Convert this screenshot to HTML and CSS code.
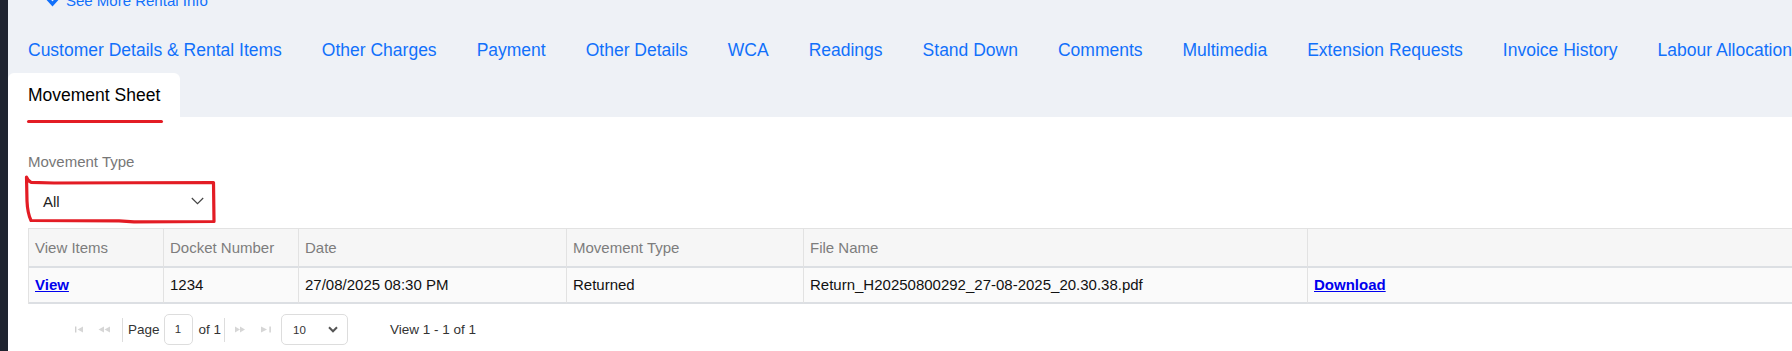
FILE: index.html
```html
<!DOCTYPE html>
<html lang="en">
<head>
<meta charset="utf-8">
<title>Movement Sheet</title>
<link rel="stylesheet" href="styles.css">
</head>
<body>
<div class="app">
  <aside class="sidebar"></aside>
  <main class="main">
    <header class="header">
      <a class="see-more" href="#">
        <svg class="see-more-icon" width="13" height="10" viewBox="0 0 13 10"><polyline points="2,2 6.5,7 11,2" fill="none" stroke="currentColor" stroke-width="3.4" stroke-linecap="square"/></svg>
        See More Rental Info
      </a>
      <nav class="tabs">
        <a class="tab" href="#">Customer Details &amp; Rental Items</a>
        <a class="tab" href="#">Other Charges</a>
        <a class="tab" href="#">Payment</a>
        <a class="tab" href="#">Other Details</a>
        <a class="tab" href="#">WCA</a>
        <a class="tab" href="#">Readings</a>
        <a class="tab" href="#">Stand Down</a>
        <a class="tab" href="#">Comments</a>
        <a class="tab" href="#">Multimedia</a>
        <a class="tab" href="#">Extension Requests</a>
        <a class="tab" href="#">Invoice History</a>
        <a class="tab" href="#">Labour Allocation</a>
      </nav>
      <div class="subtabs">
        <a class="subtab" href="#">Movement Sheet</a>
      </div>
    </header>

    <section class="panel">
      <label class="field-label">Movement Type</label>
      <div class="select-wrap">
        <div class="select">
          <span>All</span>
          <svg width="13" height="8" viewBox="0 0 13 8"><polyline points="0.8,1 6.5,6.6 12.2,1" fill="none" stroke="#444" stroke-width="1.2"/></svg>
        </div>
        <svg class="annot" width="194" height="50" viewBox="0 0 194 50">
          <path d="M2.5 2 Q4 6 7 7.3 L30 8 L189.5 7.5 L190 46.5 L110 46.8 L95 45.8 L7 45.5 Q3.5 38 3 26 Z" fill="none" stroke="#e31c24" stroke-width="3.2" stroke-linejoin="round" stroke-linecap="round"/>
        </svg>
      </div>

      <table class="grid">
        <colgroup>
          <col class="c1"><col class="c2"><col class="c3"><col class="c4"><col class="c5"><col class="c6">
        </colgroup>
        <thead>
          <tr>
            <th>View Items</th>
            <th>Docket Number</th>
            <th>Date</th>
            <th>Movement Type</th>
            <th>File Name</th>
            <th></th>
          </tr>
        </thead>
        <tbody>
          <tr>
            <td><a class="link" href="#">View</a></td>
            <td>1234</td>
            <td>27/08/2025 08:30 PM</td>
            <td>Returned</td>
            <td>Return_H20250800292_27-08-2025_20.30.38.pdf</td>
            <td><a class="link" href="#">Download</a></td>
          </tr>
        </tbody>
      </table>

      <div class="pager">
        <svg class="pg-first" width="8" height="7" viewBox="0 0 8 7"><rect x="0" y="0.5" width="1.4" height="6" fill="#cfcfcf"/><polygon points="8,0.5 2.6,3.5 8,6.5" fill="#d6d6d6"/></svg>
        <svg class="pg-prev" width="12" height="7" viewBox="0 0 12 7"><polygon points="6,0.5 0.5,3.5 6,6.5" fill="#d6d6d6"/><polygon points="12,0.5 6.5,3.5 12,6.5" fill="#d6d6d6"/></svg>
        <span class="pg-sep sep-a"></span>
        <span class="pg-text pg-page">Page</span>
        <span class="pg-input">1</span>
        <span class="pg-text pg-of">of 1</span>
        <span class="pg-sep sep-b"></span>
        <svg class="pg-next" width="10" height="7" viewBox="0 0 10 7"><polygon points="0,0.5 5,3.5 0,6.5" fill="#d6d6d6"/><polygon points="5,0.5 10,3.5 5,6.5" fill="#d6d6d6"/></svg>
        <svg class="pg-last" width="10" height="7" viewBox="0 0 10 7"><polygon points="0,0.5 6,3.5 0,6.5" fill="#d6d6d6"/><rect x="8.4" y="0.5" width="1.4" height="6" fill="#cfcfcf"/></svg>
        <div class="pg-size">
          <span>10</span>
          <svg width="10" height="7" viewBox="0 0 10 7"><polyline points="1,1.3 5,5.3 9,1.3" fill="none" stroke="#555" stroke-width="2"/></svg>
        </div>
        <span class="pg-text pg-info">View 1 - 1 of 1</span>
      </div>
    </section>
  </main>
</div>
</body>
</html>
```

FILE: styles.css
```css
* {
  box-sizing: border-box;
}

html, body {
  margin: 0;
  padding: 0;
  background: #ffffff;
}

body {
  font-family: "Liberation Sans", Arial, sans-serif;
  color: #111;
}

.app {
  display: flex;
  width: 100%;
  height: 100vh;
  overflow: hidden;
  background: #ffffff;
}

.sidebar {
  flex: none;
  width: 8px;
  background: #1f2430;
}

.main {
  flex: 1;
  min-width: 0;
  overflow: hidden;
  background: #ffffff;
}

/* ---------- header ---------- */
.header {
  background: #eef1f6;
  display: flex;
  flex-direction: column;
}

.see-more {
  display: flex;
  align-items: center;
  gap: 7px;
  margin-top: -8px;
  margin-left: 38px;
  height: 18px;
  line-height: 18px;
  font-size: 15px;
  color: #1170fb;
  text-decoration: none;
  white-space: nowrap;
}

.see-more-icon {
  flex: none;
  margin-top: 1px;
}

.tabs {
  display: flex;
  margin-top: 29px;
  white-space: nowrap;
}

.tab {
  flex: none;
  padding: 0 20px;
  font-size: 17.5px;
  line-height: 22px;
  color: #1170fb;
  text-decoration: none;
}

.subtabs {
  display: flex;
  margin-top: 12px;
}

.subtab {
  position: relative;
  display: block;
  padding: 0 20px;
  height: 44px;
  line-height: 44px;
  font-size: 17.5px;
  color: #000;
  background: #ffffff;
  border-radius: 6px 6px 0 0;
  text-decoration: none;
  white-space: nowrap;
}

.subtab::after {
  content: "";
  position: absolute;
  left: 19px;
  top: 47px;
  width: 136px;
  height: 3.4px;
  border-radius: 2px;
  background: #e31c24;
}

/* ---------- panel ---------- */
.panel {
  padding: 36px 0 0 20px;
}

.field-label {
  display: block;
  font-size: 15px;
  line-height: 18px;
  color: #777;
}

.select-wrap {
  position: relative;
  margin-top: 10px;
  width: 184px;
  height: 39px;
}

.select {
  display: flex;
  align-items: center;
  justify-content: space-between;
  height: 100%;
  padding: 1px 8px 0 15px;
  font-size: 15px;
  color: #222;
}

.annot {
  position: absolute;
  left: -4px;
  top: -6px;
}

/* ---------- table ---------- */
.grid {
  margin-top: 8px;
  width: 1802px;
  table-layout: fixed;
  border-collapse: separate;
  border-spacing: 0;
  border-top: 1px solid #e2e2e2;
  border-left: 1px solid #e2e2e2;
  font-size: 15px;
}

.c1 { width: 135px; }
.c2 { width: 135px; }
.c3 { width: 268px; }
.c4 { width: 237px; }
.c5 { width: 504px; }
.c6 { width: 522px; }

.grid th,
.grid td {
  padding: 0 6px;
  text-align: left;
  white-space: nowrap;
  overflow: hidden;
  border-right: 1px solid #e2e2e2;
  border-bottom: 2px solid #dcdfe3;
}

.grid th {
  height: 39px;
  line-height: 37px;
  font-weight: normal;
  color: #7d7d7d;
  background: #f6f6f6;
}

.grid td {
  height: 36px;
  line-height: 34px;
  color: #111;
  background: #fafafa;
}

.link {
  color: #0000ee;
  font-weight: bold;
  text-decoration: underline;
}

/* ---------- pager ---------- */
.pager {
  display: flex;
  align-items: center;
  height: 31px;
  margin-top: 10px;
  padding-left: 47px;
  font-size: 13.5px;
  color: #333;
}

.pager > * {
  flex: none;
}

.pg-prev { margin-left: 15px; }

.pg-sep {
  width: 1px;
  height: 24px;
  background: #dddddd;
}

.sep-a { margin-left: 12px; }
.sep-b { margin-left: 3px; }

.pg-page { margin-left: 5px; }

.pg-input {
  margin-left: 4px;
  width: 29px;
  height: 31px;
  border: 1px solid #dddddd;
  border-radius: 5px;
  font-size: 11.5px;
  line-height: 29px;
  text-align: center;
  color: #333;
}

.pg-of { margin-left: 6px; }

.pg-next { margin-left: 10px; }
.pg-last { margin-left: 16px; }

.pg-size {
  margin-left: 10px;
  width: 67px;
  height: 31px;
  display: flex;
  align-items: center;
  justify-content: space-between;
  padding: 0 9px 0 11px;
  border: 1px solid #dddddd;
  border-radius: 5px;
  font-size: 11.5px;
  color: #333;
}

.pg-info { margin-left: 42px; }
```
